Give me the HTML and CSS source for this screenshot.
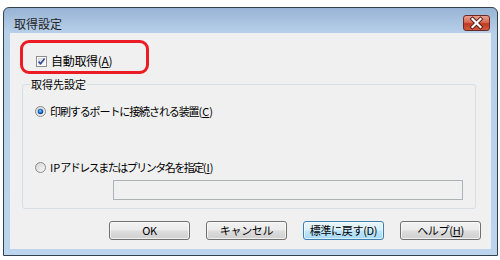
FILE: index.html
```html
<!DOCTYPE html>
<html lang="ja">
<head>
<meta charset="utf-8">
<title>取得設定</title>
<link rel="stylesheet" href="styles.css">
</head>
<body>
<div class="window">
  <div class="titlebar">
    <span class="title">取得設定</span>
    <button class="close" aria-label="閉じる">
      <svg width="27" height="16" viewBox="0 0 27 16">
        <path d="M9.5 4 L17.5 12 M17.5 4 L9.5 12" stroke="#5a1a14" stroke-width="4" stroke-linecap="square"/>
        <path d="M9.5 4 L17.5 12 M17.5 4 L9.5 12" stroke="#ffffff" stroke-width="2.2" stroke-linecap="square"/>
      </svg>
    </button>
  </div>
  <div class="client">
    <div class="highlight">
      <label class="opt">
        <svg class="box" width="11" height="11" viewBox="0 0 11 11">
          <defs>
            <linearGradient id="cbg" x1="0" y1="0" x2="1" y2="1">
              <stop offset="0" stop-color="#d6d6d6"/>
              <stop offset="1" stop-color="#fbfbfb"/>
            </linearGradient>
          </defs>
          <rect x="0.5" y="0.5" width="10" height="10" fill="#fff" stroke="#8c8c8c"/>
          <rect x="2" y="2" width="7" height="7" fill="url(#cbg)"/>
          <path d="M2.6 5.6 L4.6 7.8 L8.6 2.6" fill="none" stroke="#2c4a99" stroke-width="1.6"/>
        </svg>
        <span>自動取得(<u>A</u>)</span>
      </label>
    </div>
    <fieldset class="group">
      <legend>取得先設定</legend>
      <label class="opt radio-row first">
        <svg class="radio" width="11" height="11" viewBox="0 0 11 11">
          <defs>
            <radialGradient id="rsel" cx="0.45" cy="0.4" r="0.6">
              <stop offset="0" stop-color="#8fd0f8"/>
              <stop offset="0.5" stop-color="#1f74c9"/>
              <stop offset="1" stop-color="#0a3f86"/>
            </radialGradient>
            <linearGradient id="rbg" x1="0" y1="0" x2="1" y2="1">
              <stop offset="0" stop-color="#d3d3d3"/>
              <stop offset="1" stop-color="#fafafa"/>
            </linearGradient>
          </defs>
          <circle cx="5.5" cy="5.5" r="5" fill="url(#rbg)" stroke="#8a8a8a"/>
          <circle cx="5.5" cy="5.5" r="2.8" fill="url(#rsel)"/>
        </svg>
        <span>印刷するポートに接続される装置<span class="latin">(<u>C</u>)</span></span>
      </label>
      <label class="opt radio-row second">
        <svg class="radio" width="11" height="11" viewBox="0 0 11 11">
          <circle cx="5.5" cy="5.5" r="5" fill="url(#rbg)" stroke="#8a8a8a"/>
        </svg>
        <span><span class="latin">IP</span>アドレスまたはプリンタ名を指定<span class="latin">(<u>I</u>)</span></span>
      </label>
      <div class="textbox"></div>
    </fieldset>
    <div class="buttons">
      <button class="btn">OK</button>
      <button class="btn">キャンセル</button>
      <button class="btn focused">標準に戻す(D)</button>
      <button class="btn">ヘルプ(<u>H</u>)</button>
    </div>
  </div>
</div>
</body>
</html>
```

FILE: styles.css
```css
html, body {
  margin: 0;
  padding: 0;
  background: #ffffff;
}

body {
  font-family: "Noto Sans CJK JP", sans-serif;
  font-size: 11px;
  color: #000;
}

.window {
  margin: 7px 0 0 3px;
  width: 495px;
  height: 249px;
  box-sizing: border-box;
  border: 1px solid #34404e;
  border-radius: 6px 6px 0 0;
  background: linear-gradient(#97b3d4 0px, #b7cfe9 24px, #bcd4ed 100%);
  padding: 0 6px 6px 6px;
  display: flex;
  flex-direction: column;
}

.titlebar {
  height: 25px;
  display: flex;
  align-items: flex-start;
  justify-content: space-between;
  padding: 0 1px 0 4px;
}

.title {
  font-size: 12px;
  line-height: 14px;
  margin-top: 9px;
  color: #1e1e1e;
}

.close {
  margin-top: 7px;
  width: 27px;
  height: 16px;
  padding: 0;
  border: 1px solid #6b2a22;
  border-radius: 3px;
  background: linear-gradient(#e8a08e 0%, #d66a55 45%, #c03a22 55%, #d05a42 100%);
  display: flex;
  align-items: center;
  justify-content: center;
  overflow: hidden;
}

.close svg {
  display: block;
  flex: none;
}

.client {
  flex: 1;
  background: #f0f0f0;
  display: flex;
  flex-direction: column;
  align-items: flex-start;
}

.highlight {
  margin: 7px 0 0 10px;
  width: 129px;
  height: 34px;
  box-sizing: border-box;
  border: 3px solid #ec1c24;
  border-radius: 9px;
  padding: 11px 0 0 13px;
}

.opt {
  display: flex;
  align-items: center;
  gap: 4px;
  line-height: 14px;
  white-space: nowrap;
}

.opt svg {
  flex: none;
  display: block;
}

.highlight .opt {
  font-size: 12px;
  letter-spacing: -0.3px;
  gap: 4px;
}

u {
  text-decoration: underline;
  text-underline-offset: 1px;
}

.group {
  margin: 3px 0 0 12px;
  width: 454px;
  height: 132px;
  box-sizing: border-box;
  border: 1px solid #d5dfe5;
  border-radius: 3px;
  padding: 0 0 0 12px;
  min-width: 0;
}

.group legend {
  padding: 0 1px;
  margin-left: -5px;
  font-size: 11px;
  line-height: 14px;
}

.radio-row {
  font-size: 11px;
}

.radio-row.first {
  margin-top: 13px;
  letter-spacing: -1.1px;
}

.radio-row.second {
  margin-top: 42px;
  letter-spacing: -1.5px;
}

.radio-row .latin {
  letter-spacing: 0;
}

.textbox {
  margin: 6px 0 0 78px;
  width: 350px;
  height: 20px;
  box-sizing: border-box;
  border: 1px solid #adb2b5;
  background: #f0f0f0;
}

.buttons {
  margin: 12px 0 0 99px;
  display: flex;
  gap: 16px;
}

.btn {
  width: 81px;
  height: 19px;
  box-sizing: border-box;
  padding: 0;
  font-family: "Noto Sans CJK JP", sans-serif;
  font-size: 11px;
  line-height: 15px;
  letter-spacing: -0.3px;
  color: #000;
  border: 1px solid #707070;
  border-radius: 3px;
  background: linear-gradient(#f2f2f2 0%, #ebebeb 48%, #dddddd 52%, #cfcfcf 100%);
  box-shadow: inset 0 0 0 1px rgba(255, 255, 255, 0.7);
}

.btn.focused {
  border-color: #3c7fb1;
  background: linear-gradient(#eaf6fd 0%, #d9f0fc 48%, #bee6fd 52%, #a7d9f5 100%);
  box-shadow: inset 0 0 0 1px rgba(255, 255, 255, 0.6);
}
```
